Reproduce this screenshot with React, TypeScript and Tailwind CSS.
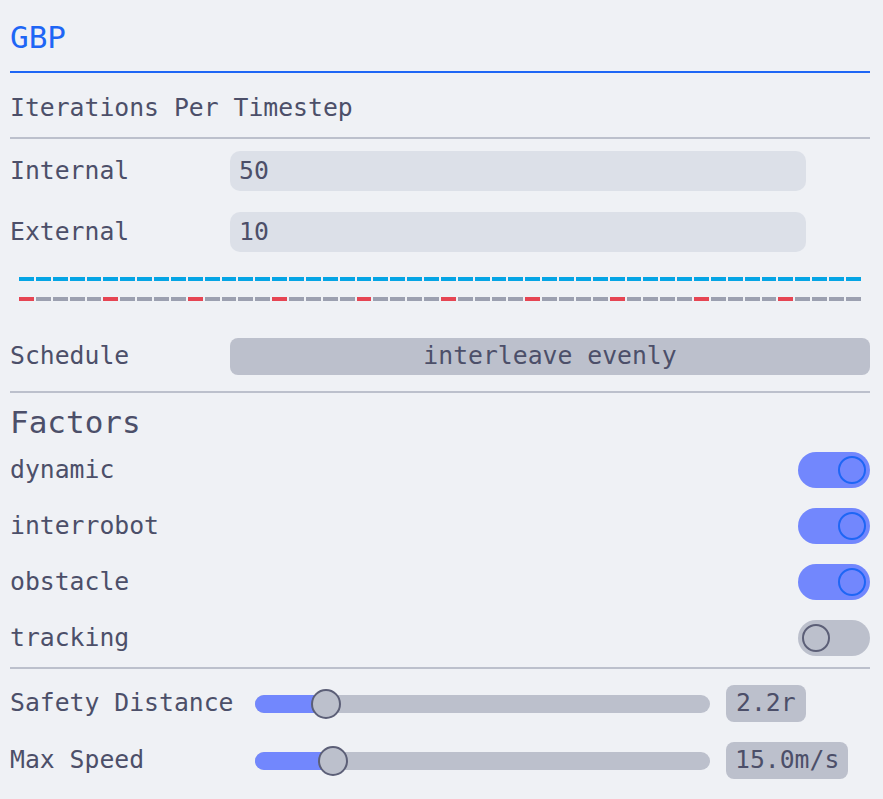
import React from 'react';

const BLUE = Array.from({ length: 50 }, (_, i) => i);

function Toggle({ on }: { on: boolean }) {
  return (
    <div
      className={`w-[72px] h-[36px] rounded-full flex items-center px-[4px] ${
        on ? 'bg-[#7287fd] justify-end' : 'bg-[#bcc0cc] justify-start'
      }`}
    >
      <div
        className={`w-[28px] h-[28px] rounded-full border-2 ${
          on ? 'border-[#1e66f5] bg-[#7287fd]' : 'border-[#5c5f77] bg-[#bcc0cc]'
        }`}
      />
    </div>
  );
}

function Slider({ fill, knob }: { fill: string; knob: string }) {
  return (
    <div className="relative w-[455px] h-[18px] rounded-full bg-[#bcc0cc]">
      <div className={`h-full rounded-full bg-[#7287fd] ${fill}`} />
      <div
        className={`absolute top-1/2 -translate-y-1/2 w-[30px] h-[30px] rounded-full bg-[#bcc0cc] border-2 border-[#5c5f77] ${knob}`}
      />
    </div>
  );
}

export default function App() {
  const factors: [string, boolean][] = [
    ['dynamic', true],
    ['interrobot', true],
    ['obstacle', true],
    ['tracking', false],
  ];

  return (
    <div className="w-[883px] h-[799px] bg-[#eff1f5] pl-[10px] pr-[13px] text-[#4c4f69] font-['DejaVu_Sans_Mono',monospace] text-[24.75px] leading-none overflow-hidden">
      {/* header */}
      <div className="h-[71px] pt-[4px] flex items-center text-[31px] text-[#1e66f5]">GBP</div>
      <div className="h-[2px] bg-[#1e66f5]" />

      <div className="h-[64px] pt-[7px] flex items-center">Iterations Per Timestep</div>
      <div className="h-[2px] bg-[#bcc0cc]" />

      <div className="mt-[12px] flex flex-col gap-[21px]">
        {[
          ['Internal', '50'],
          ['External', '10'],
        ].map(([label, val]) => (
          <div key={label} className="flex items-center h-[40px]">
            <div className="w-[220px]">{label}</div>
            <div className="w-[576px] h-full rounded-[10px] bg-[#dce0e8] flex items-center pl-[9px]">{val}</div>
          </div>
        ))}
      </div>

      {/* timeline */}
      <div className="mt-[25px] px-[9px] flex flex-col gap-[16px]">
        <div className="flex gap-[2px] h-[4px]">
          {BLUE.map((i) => (
            <div key={i} className="flex-1 bg-[#04a5e5]" />
          ))}
        </div>
        <div className="flex gap-[2px] h-[4px]">
          {BLUE.map((i) => (
            <div key={i} className={`flex-1 ${i % 5 === 0 ? 'bg-[#e64553]' : 'bg-[#9ca0b0]'}`} />
          ))}
        </div>
      </div>

      <div className="mt-[37px] h-[37px] flex items-center">
        <div className="w-[220px]">Schedule</div>
        <div className="flex-1 h-full rounded-[8px] bg-[#bcc0cc] flex items-center justify-center">
          interleave evenly
        </div>
      </div>
      <div className="mt-[16px] h-[2px] bg-[#bcc0cc]" />

      <div className="h-[59px] flex items-center text-[31px]">Factors</div>

      <div className="flex flex-col gap-[20px]">
        {factors.map(([name, on]) => (
          <div key={name} className="h-[36px] flex items-center justify-between">
            <span>{name}</span>
            <Toggle on={on} />
          </div>
        ))}
      </div>
      <div className="mt-[11px] h-[2px] bg-[#bcc0cc]" />

      <div className="mt-[16px] flex flex-col gap-[20px]">
        <div className="h-[37px] flex items-center">
          <div className="w-[245px]">Safety Distance</div>
          <Slider fill="w-[71px]" knob="left-[56px]" />
          <div className="ml-[16px] h-full rounded-[8px] bg-[#bcc0cc] px-[10px] flex items-center">2.2r</div>
        </div>
        <div className="h-[37px] flex items-center">
          <div className="w-[245px]">Max Speed</div>
          <Slider fill="w-[78px]" knob="left-[63px]" />
          <div className="ml-[16px] h-full rounded-[8px] bg-[#bcc0cc] px-[9px] flex items-center">15.0m/s</div>
        </div>
      </div>
    </div>
  );
}
